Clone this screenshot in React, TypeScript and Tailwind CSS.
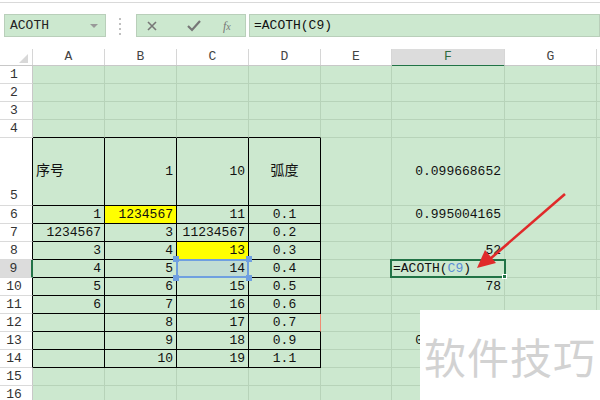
import React from "react";

const cols = [
  { k: "A", w: "w-[72px]" },
  { k: "B", w: "w-[72px]" },
  { k: "C", w: "w-[72px]" },
  { k: "D", w: "w-[72px]" },
  { k: "E", w: "w-[71px]" },
  { k: "F", w: "w-[113px]" },
  { k: "G", w: "w-[92px]" },
];

const table: Record<number, string[]> = {
  5: ["序号", "1", "10", "弧度"],
  6: ["1", "1234567", "11", "0.1"],
  7: ["1234567", "3", "11234567", "0.2"],
  8: ["3", "4", "13", "0.3"],
  9: ["4", "5", "14", "0.4"],
  10: ["5", "6", "15", "0.5"],
  11: ["6", "7", "16", "0.6"],
  12: ["", "8", "17", "0.7"],
  13: ["", "9", "18", "0.9"],
  14: ["", "10", "19", "1.1"],
};

const fCol: Record<number, string> = {
  5: "0.099668652",
  6: "0.995004165",
  8: "52",
  10: "78",
  13: "0.905148254",
};

const rows = Array.from({ length: 16 }, (_, i) => i + 1);

function Toolbar() {
  return (
    <div className="h-[47px] bg-white border-t border-[#d9d9d9] mt-[2px] relative">
      <div className="absolute left-[4px] top-[11px] w-[102px] h-[23px] bg-[#cce8cf] border border-[#b9cfba] flex items-center px-[5px] justify-between">
        <span className="text-[13px] text-[#222]">ACOTH</span>
        <span className="w-0 h-0 border-l-[4px] border-r-[4px] border-t-[4px] border-l-transparent border-r-transparent border-t-[#999] mr-[2px]" />
      </div>
      <div className="absolute left-[119px] top-[15px] flex flex-col gap-[3px]">
        <span className="w-[2px] h-[2px] bg-[#c0c0c0]" />
        <span className="w-[2px] h-[2px] bg-[#c0c0c0]" />
        <span className="w-[2px] h-[2px] bg-[#c0c0c0]" />
        <span className="w-[2px] h-[2px] bg-[#c0c0c0]" />
      </div>
      <div className="absolute left-[136px] top-[11px] w-[110px] h-[23px] bg-[#cce8cf] border border-[#b9cfba] flex items-center">
        <svg className="absolute left-[10px] top-[6px]" width="10" height="10" viewBox="0 0 10 10">
          <path d="M1 1 L9 9 M9 1 L1 9" stroke="#777" strokeWidth="1.6" />
        </svg>
        <svg className="absolute left-[50px] top-[5px]" width="14" height="12" viewBox="0 0 14 12">
          <path d="M1 6 L5 10 L13 1" stroke="#777" strokeWidth="2.2" fill="none" />
        </svg>
        <span className="absolute left-[86px] top-[2px] text-[12px] italic text-[#777] font-['Liberation_Serif',serif]">
          f<span className="text-[10px]">x</span>
        </span>
      </div>
      <div className="absolute left-[249px] top-[11px] right-0 h-[23px] bg-[#cce8cf] border border-[#b9cfba] flex items-center pl-[4px]">
        <span className="text-[13px] text-[#111]">=ACOTH(C9)</span>
      </div>
    </div>
  );
}

function HeaderRow() {
  return (
    <div className="flex h-[17px] bg-white border-b border-[#c8c8c8]">
      <div className="w-[33px] shrink-0 border-r border-[#d6d6d6] relative">
        <svg className="absolute left-[19px] top-[5px]" width="9" height="9" viewBox="0 0 9 9">
          <path d="M9 0 L9 9 L0 9 Z" fill="#d8d8d8" />
        </svg>
      </div>
      {cols.map((c) =>
        c.k === "F" ? (
          <div
            key={c.k}
            className={`${c.w} shrink-0 bg-[#dcdcdc] border-b-2 border-[#217346] border-r border-r-[#d6d6d6] flex items-center justify-center text-[13px] text-[#2d6b3f] h-[18px]`}
          >
            {c.k}
          </div>
        ) : (
          <div
            key={c.k}
            className={`${c.w} shrink-0 border-r border-[#d6d6d6] flex items-center justify-center text-[13px] text-[#444]`}
          >
            {c.k}
          </div>
        )
      )}
      <div className="flex-1" />
    </div>
  );
}

function cellClass(r: number, ci: number) {
  const inTable = ci <= 3 && r >= 5 && r <= 14;
  const topEdge = ci <= 3 && r === 4;
  let cls = "shrink-0 relative flex items-center text-[13px] text-[#111] border-r border-b ";
  if (inTable) {
    cls += r === 12 && ci === 3 ? "border-b-black border-r-[#ef8b73] " : "border-black ";
  } else if (topEdge) {
    cls += "border-r-[#b7d3b9] border-b-black ";
  } else {
    cls += "border-[#b7d3b9] ";
  }
  return cls;
}

function SheetRow({ r }: { r: number }) {
  const h = r === 5 ? "h-[68px]" : "h-[18px]";
  const inTable = r >= 5 && r <= 14;
  const activeRow = r === 9;
  return (
    <div className={`flex ${h}`}>
      <div
        className={`w-[33px] shrink-0 flex justify-center pr-[4px] text-[13px] border-b border-[#dadada] border-r ${
          activeRow
            ? "bg-[#dcdcdc] border-r-2 border-r-[#217346] text-[#333]"
            : inTable
            ? "bg-white border-r-black text-[#333]"
            : "bg-white border-r-[#c8c8c8] text-[#333]"
        } ${r === 5 ? "items-end" : "items-center"}`}
      >
        {r}
      </div>
      {cols.map((c, ci) => {
        let content: React.ReactNode = null;
        let justify = "justify-end pr-[3px]";
        let bg = "bg-[#cce8cf]";
        if (ci <= 3 && table[r]) {
          const v = table[r][ci];
          content = v;
          if (r === 5 && ci === 0) justify = "justify-start pl-[3px]";
          if (ci === 3) justify = "justify-center";
          if (r === 5 && (ci === 0 || ci === 3)) content = <span className="text-[14px]">{v}</span>;
          if ((r === 6 && ci === 1) || (r === 8 && ci === 2)) bg = "bg-[#ffff00]";
        }
        if (c.k === "F" && fCol[r]) content = fCol[r];
        const sel = r === 9 && ci === 2;
        const edit = r === 9 && c.k === "F";
        if (sel) bg = "bg-[#c2ddd3] z-10";
        return (
          <div key={c.k} className={`${c.w} ${cellClass(r, ci)} ${bg} ${justify}`}>
            {sel && (
              <>
                <span className="absolute inset-[-1px] border-2 border-[#6f9fe0] pointer-events-none" />
                <span className="absolute left-[-4px] top-[-4px] w-[6px] h-[6px] bg-[#6f9fe0]" />
                <span className="absolute left-[-4px] bottom-[-4px] w-[6px] h-[6px] bg-[#6f9fe0]" />
                <span className="absolute right-[-4px] top-[-4px] w-[6px] h-[6px] bg-[#6f9fe0]" />
                <span className="absolute right-[-4px] bottom-[-4px] w-[6px] h-[6px] bg-[#6f9fe0]" />
              </>
            )}
            {edit ? (
              <div className="absolute left-[-2px] top-[-1px] right-[-2px] bottom-[-1px] border-2 border-[#217346] flex items-center pl-[1px] z-10">
                <span>
                  =ACOTH(<span className="text-[#5b8fd6]">C9</span>)
                </span>
                <span className="absolute right-[-3px] bottom-[-3px] w-[5px] h-[5px] bg-[#217346] border border-white" />
              </div>
            ) : (
              <span className="relative">{content}</span>
            )}
          </div>
        );
      })}
      <div className="flex-1 bg-[#cce8cf] border-b border-[#b7d3b9]" />
    </div>
  );
}

export default function App() {
  return (
    <div className="w-[600px] h-[400px] overflow-hidden bg-white relative font-['Liberation_Mono','Noto_Sans_CJK_SC',monospace]">
      <Toolbar />
      <HeaderRow />
      {rows.map((r) => (
        <SheetRow key={r} r={r} />
      ))}
      <div className="absolute left-[420px] top-[310px] w-[180px] h-[90px] bg-white flex items-center justify-center z-20">
        <span className="text-[42px] text-[#d2d2d2] font-['Noto_Sans_CJK_SC',sans-serif] tracking-[1px]">软件技巧</span>
      </div>
      <svg className="absolute left-0 top-0 z-30 pointer-events-none" width="600" height="400">
        <line x1="565" y1="194" x2="490" y2="259" stroke="#e02a2a" strokeWidth="2.6" />
        <path d="M477 268 L485 250 L496 263 Z" fill="#e02a2a" />
      </svg>
    </div>
  );
}
